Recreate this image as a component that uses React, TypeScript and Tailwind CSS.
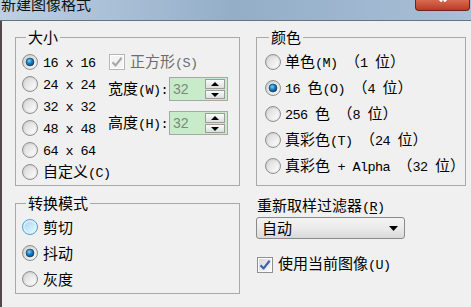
import React from 'react'

// ascii runs get a mono face at half the cjk width, like SimSun does
function T({ s, className = '' }: { s: string; className?: string }) {
  const parts = s.split(/([\x20-\x7e]+)/).filter(Boolean)
  return (
    <span className={'whitespace-nowrap ' + className}>
      {parts.map((p, i) =>
        /^[\x20-\x7e]+$/.test(p) ? (
          <span key={i} className="font-['Liberation_Mono',monospace] text-[13.5px] tracking-[-0.6px] whitespace-pre">
            {p}
          </span>
        ) : (
          <span key={i}>{p}</span>
        )
      )}
    </span>
  )
}

function Radio({ checked = false, hover = false }: { checked?: boolean; hover?: boolean }) {
  return (
    <svg width="16" height="16" viewBox="0 0 16 16" className="shrink-0">
      <defs>
        <linearGradient id="rOut" x1="0" y1="0" x2="1" y2="1">
          <stop offset="0" stopColor="#c9c9c9" />
          <stop offset="1" stopColor="#f7f7f7" />
        </linearGradient>
        <linearGradient id="rIn" x1="0" y1="0" x2="1" y2="1">
          <stop offset="0" stopColor="#d9d9d9" />
          <stop offset="1" stopColor="#fdfdfd" />
        </linearGradient>
        <linearGradient id="rHov" x1="0" y1="0" x2="1" y2="1">
          <stop offset="0" stopColor="#a9d8f6" />
          <stop offset="1" stopColor="#e8f6fe" />
        </linearGradient>
        <radialGradient id="rDot" cx="0.4" cy="0.35" r="0.7">
          <stop offset="0" stopColor="#7fd0ff" />
          <stop offset="0.45" stopColor="#1b84c9" />
          <stop offset="1" stopColor="#0b3f6e" />
        </radialGradient>
      </defs>
      <circle cx="8" cy="8" r="7.5" fill={hover ? '#dff1fc' : 'url(#rOut)'} stroke={hover ? '#4f9ed3' : '#8e8f8f'} />
      <circle cx="8" cy="8" r="5.5" fill={hover ? 'url(#rHov)' : 'url(#rIn)'} />
      {checked && <circle cx="8" cy="8" r="4" fill="url(#rDot)" stroke="#123a5c" strokeWidth="0.6" />}
    </svg>
  )
}

function Check({ checked = false, disabled = false }: { checked?: boolean; disabled?: boolean }) {
  return (
    <svg width="16" height="16" viewBox="0 0 16 16" className="shrink-0">
      <defs>
        <linearGradient id="cIn" x1="0" y1="0" x2="1" y2="1">
          <stop offset="0" stopColor="#d6d6d6" />
          <stop offset="1" stopColor="#fafafa" />
        </linearGradient>
      </defs>
      <rect x="0.5" y="0.5" width="15" height="15" fill="#fff" stroke={disabled ? '#b5b5b5' : '#8e8f8f'} />
      <rect x="2" y="2" width="12" height="12" fill={disabled ? '#f4f4f4' : 'url(#cIn)'} />
      {checked && (
        <path
          d="M3.5 8.2 L6.6 11.4 L12.6 3.8"
          fill="none"
          stroke={disabled ? '#a8a8a8' : '#3a63b0'}
          strokeWidth="2.2"
          strokeLinejoin="round"
        />
      )}
    </svg>
  )
}

function SpinBox({ value }: { value: string }) {
  return (
    <div className="flex h-[24px] w-[59px] shrink-0 items-center border border-[#a7a7a7] bg-[#c8ecca]">
      <span className="flex-1 pl-[3px] font-['Liberation_Sans',sans-serif] text-[14px] leading-[20px] text-[#7b8a7b]">
        {value}
      </span>
      <div className="mr-[2px] flex h-[20px] w-[20px] flex-col gap-[1px]">
        <div className="flex h-[10px] items-center justify-center border border-[#9c9c9c] bg-linear-to-b from-[#fbfbfb] to-[#dedede]">
          <svg width="8" height="4" viewBox="0 0 8 4"><path d="M0 4 L4 0 L8 4 Z" fill="#000" /></svg>
        </div>
        <div className="flex h-[9px] items-center justify-center border border-[#9c9c9c] bg-linear-to-b from-[#fbfbfb] to-[#dedede]">
          <svg width="8" height="4" viewBox="0 0 8 4"><path d="M0 0 L8 0 L4 4 Z" fill="#000" /></svg>
        </div>
      </div>
    </div>
  )
}

const sizes = ['16 x 16', '24 x 24', '32 x 32', '48 x 48', '64 x 64', '自定义(C)']
const colors = ['单色(M) （1 位）', '16 色(O) （4 位）', '256 色 （8 位）', '真彩色(T) （24 位）', '真彩色 + Alpha （32 位）']

export default function App() {
  return (
    <div className="h-[307px] w-[471px] overflow-hidden bg-[#f0f0f0] font-['Noto_Sans_CJK_SC',sans-serif] text-[15px] leading-[18px] text-black">
      {/* title bar */}
      <div className="flex h-[20px] items-start justify-between bg-linear-to-r from-[#bdd0e3] via-[#94aec8] to-[#a8bfd6]">
        <span className="mt-[-4px] pl-[1px] text-[15px] leading-[15px] text-[#111]">新建图像格式</span>
        <div className="mr-[1px] flex h-[11px] w-[55px] items-start justify-center rounded-b-[4px] border border-t-0 border-[#6e2417] bg-linear-to-b from-[#d86a4f] to-[#b93a25]">
          <svg width="12" height="4" viewBox="0 0 12 4">
            <path d="M1.5 -2 L5 1.5 M10.5 -2 L7 1.5" stroke="#fff" strokeWidth="2.4" />
          </svg>
        </div>
      </div>
      <div className="h-px bg-[#66727f]" />

      <div className="h-[286px] border-l-2 border-[#524749] pl-[13px] pt-[8px]">
        <div className="grid grid-cols-[225px_206px] grid-rows-[157px_auto] gap-x-[16px] gap-y-[9px]">
          {/* 大小 */}
          <fieldset className="h-[157px] border border-[#a9a9a9] pt-[6px] pl-[6px]">
            <legend className="ml-[4px] px-[2px] leading-[16px]">大小</legend>
            <div className="flex">
              <div className="flex w-[86px] shrink-0 flex-col">
                {sizes.map((s, i) => (
                  <div key={s} className="flex h-[22px] items-center gap-[5px]">
                    <Radio checked={i === 0} />
                    <T s={s} />
                  </div>
                ))}
              </div>
              <div className="flex flex-col">
                <div className="flex h-[22px] items-center gap-[5px] pl-[1px]">
                  <Check checked disabled />
                  <T s="正方形(S)" className="text-[#6d6d6d]" />
                </div>
                <div className="mt-[4px] flex items-center gap-[1px]">
                  <T s="宽度(W):" />
                  <SpinBox value="32" />
                </div>
                <div className="mt-[10px] flex items-center gap-[1px]">
                  <T s="高度(H):" />
                  <SpinBox value="32" />
                </div>
              </div>
            </div>
          </fieldset>

          {/* 颜色 */}
          <fieldset className="h-[157px] border border-[#a9a9a9] pt-[4px] pl-[8px]">
            <legend className="ml-[4px] px-[2px] leading-[16px]">颜色</legend>
            {colors.map((c, i) => (
              <div key={c} className="flex h-[26px] items-center gap-[4px]">
                <Radio checked={i === 1} />
                <T s={c} />
              </div>
            ))}
          </fieldset>

          {/* 转换模式 */}
          <fieldset className="h-[99px] border border-[#a9a9a9] pt-[3px] pl-[6px]">
            <legend className="ml-[4px] px-[2px] leading-[16px]">转换模式</legend>
            {['剪切', '抖动', '灰度'].map((m, i) => (
              <div key={m} className="flex h-[26px] items-center gap-[5px]">
                <Radio checked={i === 1} hover={i === 0} />
                <span>{m}</span>
              </div>
            ))}
          </fieldset>

          {/* resample */}
          <div className="flex flex-col">
            <div className="h-[20px] whitespace-nowrap pl-[1px] leading-[20px]">
              重新取样过滤器
              <span className="font-['Liberation_Mono',monospace] text-[13.5px] tracking-[-0.6px]">
                (<span className="underline underline-offset-2">R</span>)
              </span>
            </div>
            <div className="mt-[2px] flex h-[22px] w-[149px] items-center justify-between rounded-[3px] border border-[#8a8a8a] bg-linear-to-b from-[#f3f3f3] via-[#ebebeb] to-[#d9d9d9] pl-[5px] pr-[6px]">
              <span>自动</span>
              <svg width="9" height="5" viewBox="0 0 9 5"><path d="M0 0 L9 0 L4.5 5 Z" fill="#000" /></svg>
            </div>
            <div className="mt-[15px] flex items-center gap-[5px] pl-[1px]">
              <Check checked />
              <T s="使用当前图像(U)" />
            </div>
          </div>
        </div>
      </div>
    </div>
  )
}
